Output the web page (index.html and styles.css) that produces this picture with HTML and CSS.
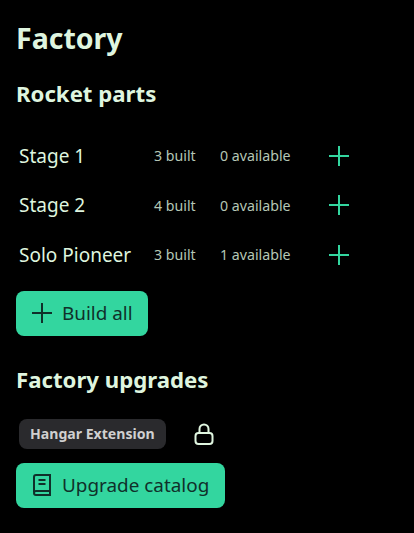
FILE: index.html
```html
<!DOCTYPE html>
<html lang="en">
<head>
    <meta charset="UTF-8">
    <title>Factory</title>
    <link rel="stylesheet" href="styles.css">
</head>
<body>
    <div class="container">
        <h1>Factory</h1>
        <h2>Rocket parts</h2>
        <div class="parts">
            <div class="part">
                <span class="part-name">Stage 1</span>
                <span class="part-built">3 built</span>
                <span class="part-available">0 available</span>
                <svg class="icon-plus" viewBox="0 0 24 24"><path d="M12 2v20M2 12h20"/></svg>
            </div>
            <div class="part">
                <span class="part-name">Stage 2</span>
                <span class="part-built">4 built</span>
                <span class="part-available">0 available</span>
                <svg class="icon-plus" viewBox="0 0 24 24"><path d="M12 2v20M2 12h20"/></svg>
            </div>
            <div class="part">
                <span class="part-name">Solo Pioneer</span>
                <span class="part-built">3 built</span>
                <span class="part-available">1 available</span>
                <svg class="icon-plus" viewBox="0 0 24 24"><path d="M12 2v20M2 12h20"/></svg>
            </div>
        </div>
        <button class="button build-all">
            <svg class="icon-plus" viewBox="0 0 24 24"><path d="M12 2v20M2 12h20"/></svg>
            Build all
        </button>
        <h2 class="upgrades-title">Factory upgrades</h2>
        <div class="upgrade">
            <span class="badge">Hangar Extension</span>
            <svg class="icon-lock" viewBox="0 0 24 24"><rect x="3.5" y="11" width="17" height="11" rx="3"/><path d="M7.5 11V7a4.5 4.5 0 0 1 9 0v4"/></svg>
        </div>
        <button class="button catalog">
            <svg class="icon-book" viewBox="0 0 24 24"><path d="M4 19V4a2 2 0 0 1 2-2h14v20H6a2 2 0 0 1-2-2 2 2 0 0 1 2-2h14"/><path d="M8.5 7h7M8.5 11h7"/></svg>
            Upgrade catalog
        </button>
    </div>
</body>
</html>
```

FILE: styles.css
```css
body {
    margin: 0;
    background-color: #000;
    color: #dff5df;
    font-family: "Noto Sans", sans-serif;
}
.container {
    padding: 16px;
}
h1 {
    margin: 0;
    font-size: 28.5px;
    line-height: 44px;
    font-weight: 700;
}
h2 {
    margin: 18px 0 0;
    font-size: 22.2px;
    line-height: 32px;
    font-weight: 700;
}
.parts {
    margin-top: 21px;
}
.part {
    display: flex;
    align-items: center;
    height: 49.5px;
    padding-left: 3px;
}
.part-name {
    width: 135px;
    font-size: 19px;
}
.part-built {
    width: 66px;
    font-size: 14.2px;
    color: #b5c7b5;
}
.part-available {
    width: 107px;
    font-size: 14.2px;
    color: #b5c7b5;
}
.icon-plus {
    width: 24px;
    height: 24px;
    fill: none;
    stroke: #33d69f;
    stroke-width: 2;
}
.button {
    display: flex;
    align-items: center;
    gap: 8px;
    height: 45px;
    padding: 0 16px;
    border: none;
    border-radius: 8px;
    background-color: #33d69f;
    color: #10302a;
    font-family: "Noto Sans", sans-serif;
    font-size: 18.9px;
}
.button .icon-plus {
    stroke: #10302a;
    margin-left: -2px;
}
.build-all {
    margin-top: 11px;
    padding-right: 15px;
}
.upgrades-title {
    margin-top: 28px;
}
.upgrade {
    display: flex;
    align-items: center;
    gap: 26px;
    margin: 23px 0 14px 3px;
}
.badge {
    padding: 0 11px;
    height: 30px;
    line-height: 30px;
    border-radius: 8px;
    background-color: #2a2a2d;
    color: #d0d0d0;
    font-size: 14.1px;
    font-weight: 700;
}
.icon-lock, .icon-book {
    width: 24px;
    height: 24px;
    fill: none;
    stroke-width: 2;
}
.icon-lock {
    stroke: #dff5df;
}
.icon-book {
    stroke: #10302a;
    margin-left: -2px;
}
```
